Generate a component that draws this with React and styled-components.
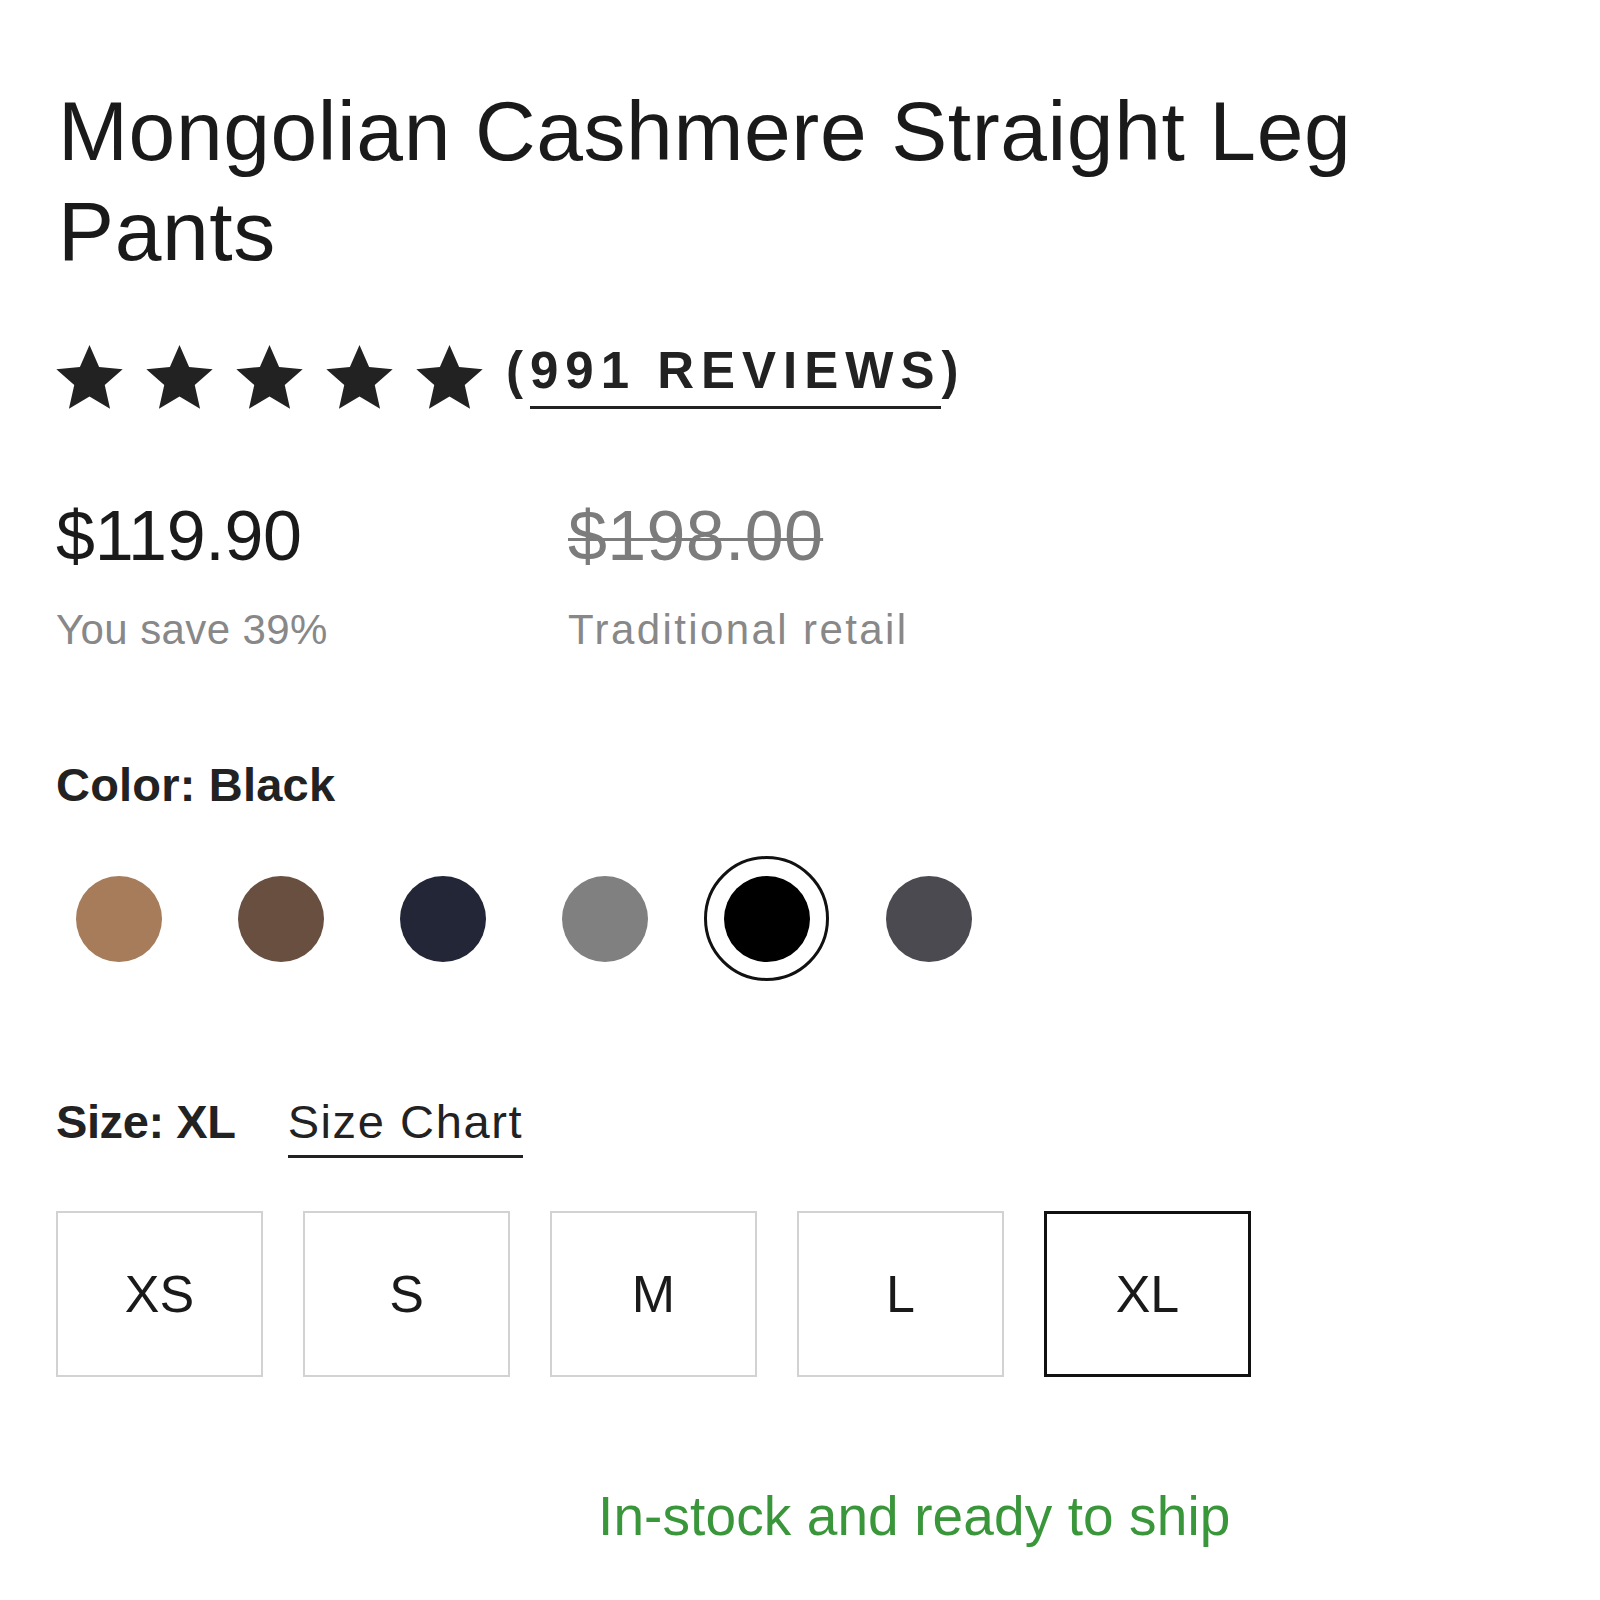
import React, { useState } from "react";
import styled, { createGlobalStyle } from "styled-components";

const GlobalStyle = createGlobalStyle`
  html, body {
    margin: 0;
    padding: 0;
    background: #ffffff;
  }
  body {
    font-family: "Liberation Sans", Arial, sans-serif;
    color: #1c1c1c;
  }
`;

const colors = [
  { name: "Camel", hex: "#a67c5a" },
  { name: "Brown", hex: "#684f40" },
  { name: "Navy", hex: "#222637" },
  { name: "Grey", hex: "#808080" },
  { name: "Black", hex: "#000000" },
  { name: "Charcoal", hex: "#4a4a50" },
];

const sizes = ["XS", "S", "M", "L", "XL"];

const Star = () => (
  <svg width="67" height="64" viewBox="2 2 20 19.3" aria-hidden="true">
    <path
      fill="#222"
      d="M12 2l2.9 6.6 7.1.7-5.4 4.8 1.6 7.1L12 17.5l-6.2 3.7 1.6-7.1L2 9.3l7.1-.7L12 2z"
    />
  </svg>
);

export default function App() {
  const [color, setColor] = useState("Black");
  const [size, setSize] = useState("XL");

  return (
    <Page>
      <GlobalStyle />
      <Title>Mongolian Cashmere Straight Leg Pants</Title>

      <RatingRow>
        <Star />
        <Star />
        <Star />
        <Star />
        <Star />
        <Reviews>
          (<ReviewLink href="#reviews">991 REVIEWS</ReviewLink>)
        </Reviews>
      </RatingRow>

      <PriceGrid>
        <PriceCol>
          <Price>$119.90</Price>
          <PriceNote>You save 39%</PriceNote>
        </PriceCol>
        <PriceCol>
          <Price $old>$198.00</Price>
          <PriceNote $wide>Traditional retail</PriceNote>
        </PriceCol>
      </PriceGrid>

      <Label>Color: {color}</Label>
      <Swatches>
        {colors.map((c) => (
          <SwatchButton
            key={c.name}
            $selected={c.name === color}
            onClick={() => setColor(c.name)}
            aria-label={c.name}
          >
            <Dot $hex={c.hex} />
          </SwatchButton>
        ))}
      </Swatches>

      <SizeHeader>
        <Label as="span">Size: {size}</Label>
        <SizeChart href="#size-chart">Size Chart</SizeChart>
      </SizeHeader>
      <SizeRow>
        {sizes.map((s) => (
          <SizeBox key={s} $selected={s === size} onClick={() => setSize(s)}>
            {s}
          </SizeBox>
        ))}
      </SizeRow>

      <Stock>In-stock and ready to ship</Stock>
    </Page>
  );
}

const Page = styled.div`
  padding: 81px 56px 40px;
  display: flex;
  flex-direction: column;
  align-items: flex-start;
`;

const Title = styled.h1`
  margin: 0;
  padding-left: 2px;
  font-size: 84px;
  line-height: 100px;
  font-weight: 400;
  color: #1a1a1a;
  letter-spacing: 0.6px;
`;

const RatingRow = styled.div`
  margin-top: 64px;
  display: flex;
  align-items: flex-start;
  gap: 23px;
`;

const Reviews = styled.span`
  font-size: 51px;
  line-height: 51px;
  font-weight: 700;
  letter-spacing: 7px;
  color: #222;
`;

const ReviewLink = styled.a`
  display: inline-block;
  color: inherit;
  text-decoration: none;
  padding-bottom: 10px;
  border-bottom: 3px solid #222;
`;

const PriceGrid = styled.div`
  margin-top: 85px;
  display: grid;
  grid-template-columns: 512px auto;
`;

const PriceCol = styled.div`
  display: flex;
  flex-direction: column;
  gap: 27px;
`;

const Price = styled.div`
  font-size: 70px;
  line-height: 84px;
  letter-spacing: ${(p) => (p.$old ? "0.3px" : "-0.3px")};
  color: ${(p) => (p.$old ? "#7c7c7c" : "#1a1a1a")};
  text-decoration: ${(p) => (p.$old ? "line-through" : "none")};
  text-decoration-thickness: 3px;
`;

const PriceNote = styled.div`
  font-size: 42px;
  line-height: 50px;
  color: #888;
  letter-spacing: ${(p) => (p.$wide ? "2.4px" : "0.4px")};
`;

const Label = styled.div`
  font-size: 47px;
  line-height: 56px;
  font-weight: 700;
  color: #222;
  letter-spacing: 0.2px;
  margin-top: 102px;
`;

const Swatches = styled.div`
  margin-top: 43px;
  display: flex;
  gap: 37px;
`;

const SwatchButton = styled.button`
  width: 125px;
  height: 125px;
  padding: 0;
  border-radius: 50%;
  background: #fff;
  border: 3px solid ${(p) => (p.$selected ? "#111" : "transparent")};
  display: flex;
  align-items: center;
  justify-content: center;
  cursor: pointer;
`;

const Dot = styled.span`
  width: 86px;
  height: 86px;
  border-radius: 50%;
  background: ${(p) => p.$hex};
`;

const SizeHeader = styled.div`
  margin-top: 113px;
  display: flex;
  align-items: flex-start;
  gap: 52px;
  ${Label} {
    margin-top: 0;
    letter-spacing: -0.4px;
  }
`;

const SizeChart = styled.a`
  font-size: 47px;
  line-height: 56px;
  color: #222;
  text-decoration: none;
  letter-spacing: 1.6px;
  padding-bottom: 5px;
  border-bottom: 3px solid #222;
`;

const SizeRow = styled.div`
  margin-top: 53px;
  display: flex;
  gap: 40px;
`;

const SizeBox = styled.button`
  box-sizing: border-box;
  width: 207px;
  height: 166px;
  background: #fff;
  border: ${(p) => (p.$selected ? "3px solid #111" : "2px solid #d2d2d2")};
  font-family: "Liberation Sans", Arial, sans-serif;
  font-size: 52px;
  color: #1a1a1a;
  display: flex;
  align-items: center;
  justify-content: center;
  padding: 0;
  cursor: pointer;
`;

const Stock = styled.div`
  margin-top: 106px;
  padding-left: 542px;
  font-size: 55px;
  line-height: 66px;
  letter-spacing: 0.1px;
  color: #3a963a;
`;
